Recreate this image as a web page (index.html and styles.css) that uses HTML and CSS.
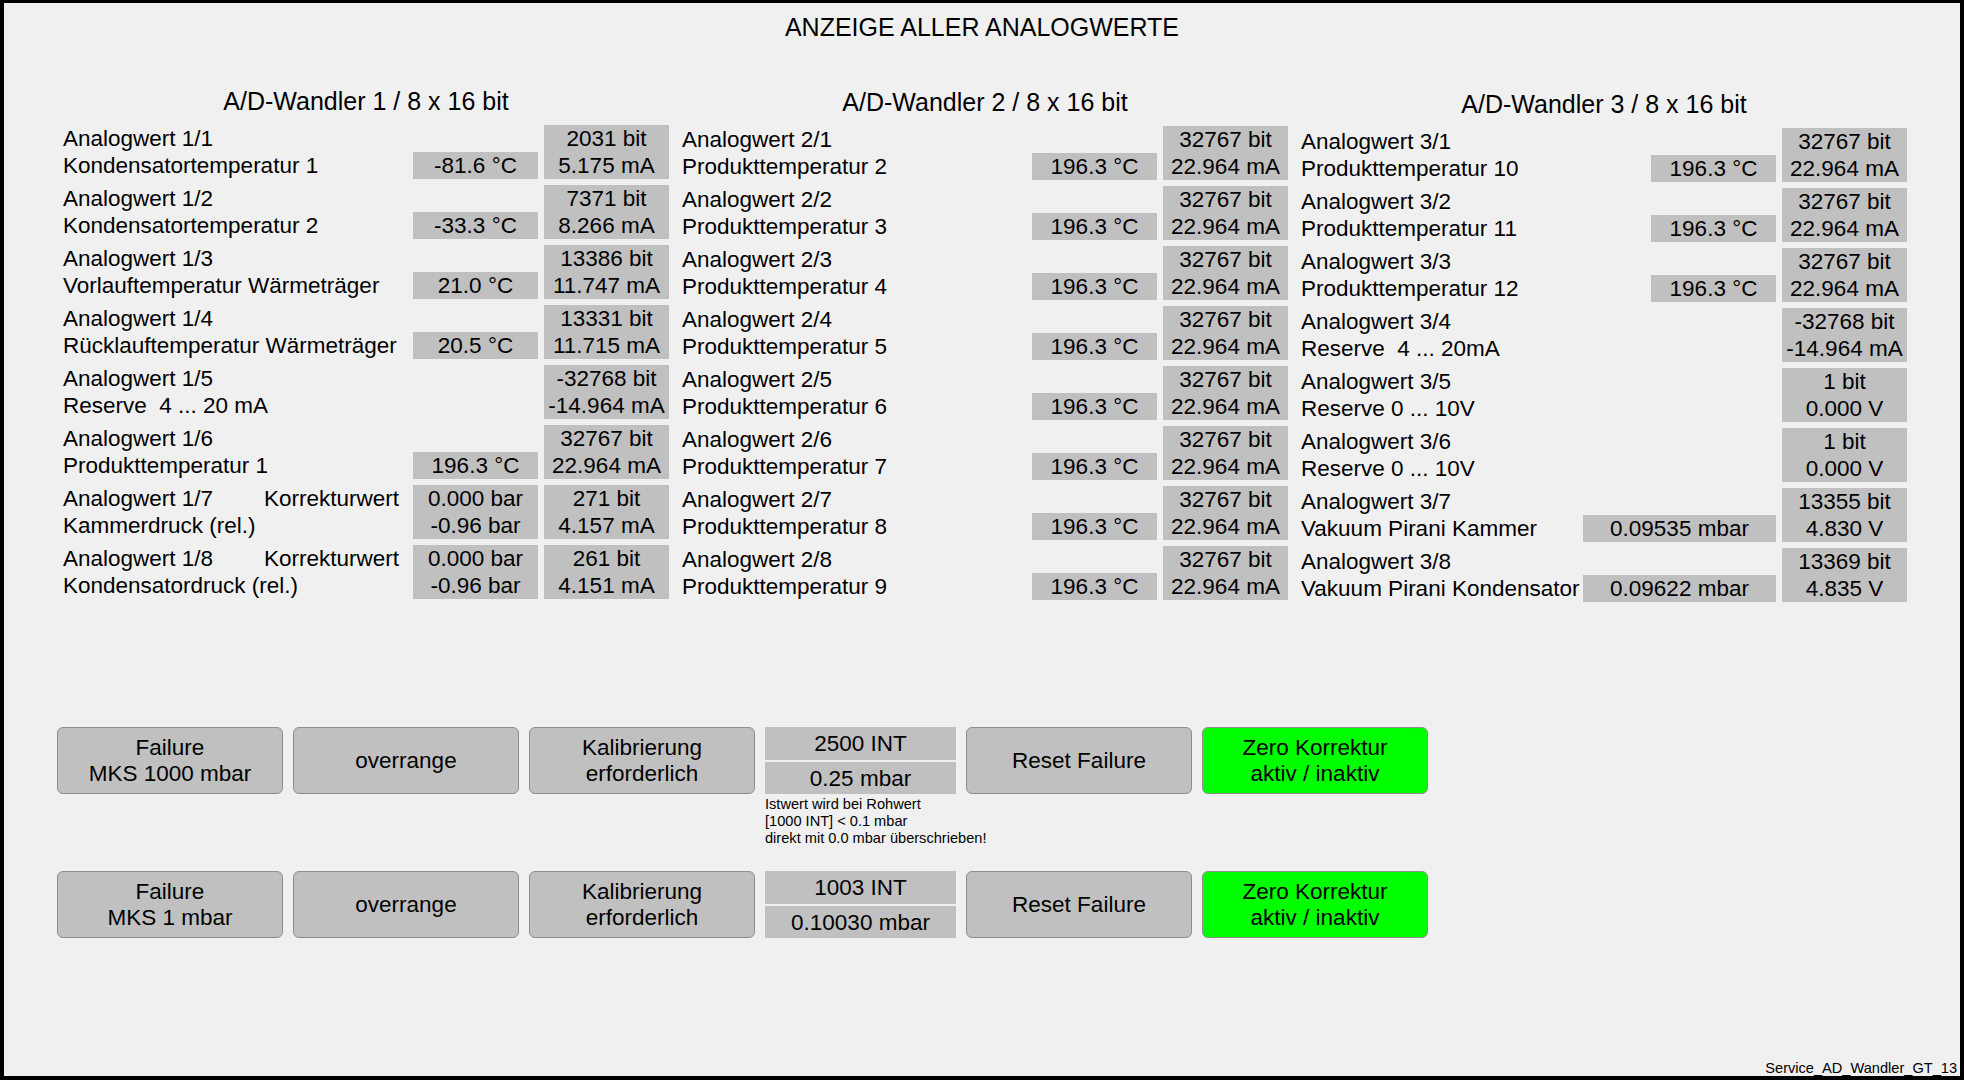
FILE: index.html
```html
<!DOCTYPE html>
<html lang="de">
<head>
<meta charset="utf-8">
<title>Service AD Wandler GT 13</title>
<link rel="stylesheet" href="styles.css">
</head>
<body>
<div class="frame">
  <h1 class="title">ANZEIGE ALLER ANALOGWERTE</h1>

  <div class="converters">
    <section class="conv">
      <h2 class="conv-head">A/D-Wandler 1 / 8 x 16 bit</h2>
      <div class="rows">
        <div class="row"><div class="label">Analogwert 1/1<br>Kondensatortemperatur 1</div><div class="val">-81.6 °C</div><div class="bits">2031 bit<br>5.175 mA</div></div>
        <div class="row"><div class="label">Analogwert 1/2<br>Kondensatortemperatur 2</div><div class="val">-33.3 °C</div><div class="bits">7371 bit<br>8.266 mA</div></div>
        <div class="row"><div class="label">Analogwert 1/3<br>Vorlauftemperatur Wärmeträger</div><div class="val">21.0 °C</div><div class="bits">13386 bit<br>11.747 mA</div></div>
        <div class="row"><div class="label">Analogwert 1/4<br>Rücklauftemperatur Wärmeträger</div><div class="val">20.5 °C</div><div class="bits">13331 bit<br>11.715 mA</div></div>
        <div class="row"><div class="label">Analogwert 1/5<br>Reserve  4 ... 20 mA</div><div class="bits">-32768 bit<br>-14.964 mA</div></div>
        <div class="row"><div class="label">Analogwert 1/6<br>Produkttemperatur 1</div><div class="val">196.3 °C</div><div class="bits">32767 bit<br>22.964 mA</div></div>
        <div class="row"><div class="label"><div class="label-top"><span>Analogwert 1/7</span><span>Korrekturwert</span></div>Kammerdruck (rel.)</div><div class="val val--double">0.000 bar<br>-0.96 bar</div><div class="bits">271 bit<br>4.157 mA</div></div>
        <div class="row"><div class="label"><div class="label-top"><span>Analogwert 1/8</span><span>Korrekturwert</span></div>Kondensatordruck (rel.)</div><div class="val val--double">0.000 bar<br>-0.96 bar</div><div class="bits">261 bit<br>4.151 mA</div></div>
      </div>
    </section>

    <section class="conv conv--2">
      <h2 class="conv-head">A/D-Wandler 2 / 8 x 16 bit</h2>
      <div class="rows">
        <div class="row"><div class="label">Analogwert 2/1<br>Produkttemperatur 2</div><div class="val">196.3 °C</div><div class="bits">32767 bit<br>22.964 mA</div></div>
        <div class="row"><div class="label">Analogwert 2/2<br>Produkttemperatur 3</div><div class="val">196.3 °C</div><div class="bits">32767 bit<br>22.964 mA</div></div>
        <div class="row"><div class="label">Analogwert 2/3<br>Produkttemperatur 4</div><div class="val">196.3 °C</div><div class="bits">32767 bit<br>22.964 mA</div></div>
        <div class="row"><div class="label">Analogwert 2/4<br>Produkttemperatur 5</div><div class="val">196.3 °C</div><div class="bits">32767 bit<br>22.964 mA</div></div>
        <div class="row"><div class="label">Analogwert 2/5<br>Produkttemperatur 6</div><div class="val">196.3 °C</div><div class="bits">32767 bit<br>22.964 mA</div></div>
        <div class="row"><div class="label">Analogwert 2/6<br>Produkttemperatur 7</div><div class="val">196.3 °C</div><div class="bits">32767 bit<br>22.964 mA</div></div>
        <div class="row"><div class="label">Analogwert 2/7<br>Produkttemperatur 8</div><div class="val">196.3 °C</div><div class="bits">32767 bit<br>22.964 mA</div></div>
        <div class="row"><div class="label">Analogwert 2/8<br>Produkttemperatur 9</div><div class="val">196.3 °C</div><div class="bits">32767 bit<br>22.964 mA</div></div>
      </div>
    </section>

    <section class="conv conv--3">
      <h2 class="conv-head">A/D-Wandler 3 / 8 x 16 bit</h2>
      <div class="rows">
        <div class="row"><div class="label">Analogwert 3/1<br>Produkttemperatur 10</div><div class="val">196.3 °C</div><div class="bits">32767 bit<br>22.964 mA</div></div>
        <div class="row"><div class="label">Analogwert 3/2<br>Produkttemperatur 11</div><div class="val">196.3 °C</div><div class="bits">32767 bit<br>22.964 mA</div></div>
        <div class="row"><div class="label">Analogwert 3/3<br>Produkttemperatur 12</div><div class="val">196.3 °C</div><div class="bits">32767 bit<br>22.964 mA</div></div>
        <div class="row"><div class="label">Analogwert 3/4<br>Reserve  4 ... 20mA</div><div class="bits">-32768 bit<br>-14.964 mA</div></div>
        <div class="row"><div class="label">Analogwert 3/5<br>Reserve 0 ... 10V</div><div class="bits">1 bit<br>0.000 V</div></div>
        <div class="row"><div class="label">Analogwert 3/6<br>Reserve 0 ... 10V</div><div class="bits">1 bit<br>0.000 V</div></div>
        <div class="row"><div class="label">Analogwert 3/7<br>Vakuum Pirani Kammer</div><div class="val val--wide">0.09535 mbar</div><div class="bits">13355 bit<br>4.830 V</div></div>
        <div class="row"><div class="label">Analogwert 3/8<br>Vakuum Pirani Kondensator</div><div class="val val--wide">0.09622 mbar</div><div class="bits">13369 bit<br>4.835 V</div></div>
      </div>
    </section>
  </div>

  <div class="sensors">
    <div class="sensor-row">
      <div class="btn">Failure<br>MKS 1000 mbar</div>
      <div class="btn">overrange</div>
      <div class="btn">Kalibrierung<br>erforderlich</div>
      <div class="int-group">
        <div class="int">2500 INT</div>
        <div class="int">0.25 mbar</div>
        <div class="note">Istwert wird bei Rohwert<br>[1000 INT] &lt; 0.1 mbar<br>direkt mit 0.0 mbar überschrieben!</div>
      </div>
      <div class="btn">Reset Failure</div>
      <div class="btn btn--green">Zero Korrektur<br>aktiv / inaktiv</div>
    </div>
    <div class="sensor-row">
      <div class="btn">Failure<br>MKS 1 mbar</div>
      <div class="btn">overrange</div>
      <div class="btn">Kalibrierung<br>erforderlich</div>
      <div class="int-group">
        <div class="int">1003 INT</div>
        <div class="int">0.10030 mbar</div>
      </div>
      <div class="btn">Reset Failure</div>
      <div class="btn btn--green">Zero Korrektur<br>aktiv / inaktiv</div>
    </div>
  </div>

  <div class="footer">Service_AD_Wandler_GT_13</div>
</div>
</body>
</html>
```

FILE: styles.css
```css
html, body {
  margin: 0;
  padding: 0;
  background: #f0f0f0;
}

.frame {
  width: 1964px;
  height: 1080px;
  box-sizing: border-box;
  border-style: solid;
  border-color: #000;
  border-width: 3px 4px 4px 4px;
  background: #f0f0f0;
  display: flex;
  flex-direction: column;
  font-family: "Liberation Sans", Arial, sans-serif;
  color: #000;
  overflow: hidden;
}

.title {
  margin: 0;
  padding-top: 9px;
  font-size: 25px;
  font-weight: normal;
  line-height: 30px;
  text-align: center;
}

.converters {
  display: flex;
  align-items: flex-start;
  gap: 13px;
  margin: 44px 0 0 59px;
}

.conv {
  width: 606px;
}

.conv--2 {
  padding-top: 1px;
}

.conv--3 {
  padding-top: 3px;
}

.conv-head {
  margin: 0 0 9px;
  font-size: 25px;
  font-weight: normal;
  line-height: 30px;
  text-align: center;
}

.rows {
  display: flex;
  flex-direction: column;
  gap: 6px;
}

.row {
  display: flex;
  height: 54px;
  font-size: 22.5px;
  line-height: 27px;
}

.label {
  flex: 1;
  min-width: 0;
  white-space: pre;
}

.label-top {
  display: flex;
  justify-content: space-between;
  padding-right: 14px;
}

.val {
  width: 125px;
  height: 27px;
  align-self: flex-end;
  background: #c0c0c0;
  text-align: center;
  white-space: nowrap;
}

.val--double {
  height: 54px;
}

.val--wide {
  width: 193px;
}

.bits {
  width: 125px;
  margin-left: 6px;
  background: #c0c0c0;
  text-align: center;
  white-space: nowrap;
}

.sensors {
  display: flex;
  flex-direction: column;
  gap: 24px;
  margin: 125px 0 0 53px;
}

.sensor-row {
  display: flex;
  align-items: flex-start;
  gap: 10px;
}

.btn {
  width: 226px;
  height: 67px;
  box-sizing: border-box;
  border: 1px solid #8e8e8e;
  border-radius: 6px;
  background: #c0c0c0;
  display: flex;
  align-items: center;
  justify-content: center;
  text-align: center;
  font-size: 22.5px;
  line-height: 26px;
}

.btn--green {
  background: #00ff00;
}

.int-group {
  width: 191px;
  display: flex;
  flex-direction: column;
  gap: 2px;
}

.int {
  height: 32.5px;
  background: #c0c0c0;
  text-align: center;
  font-size: 22.5px;
  line-height: 33px;
}

.note {
  margin-top: 0;
  font-size: 14.6px;
  line-height: 17px;
  white-space: nowrap;
}

.footer {
  margin-top: auto;
  margin-bottom: 0;
  align-self: flex-end;
  padding-right: 3px;
  font-size: 14.6px;
  line-height: 16px;
}
```
